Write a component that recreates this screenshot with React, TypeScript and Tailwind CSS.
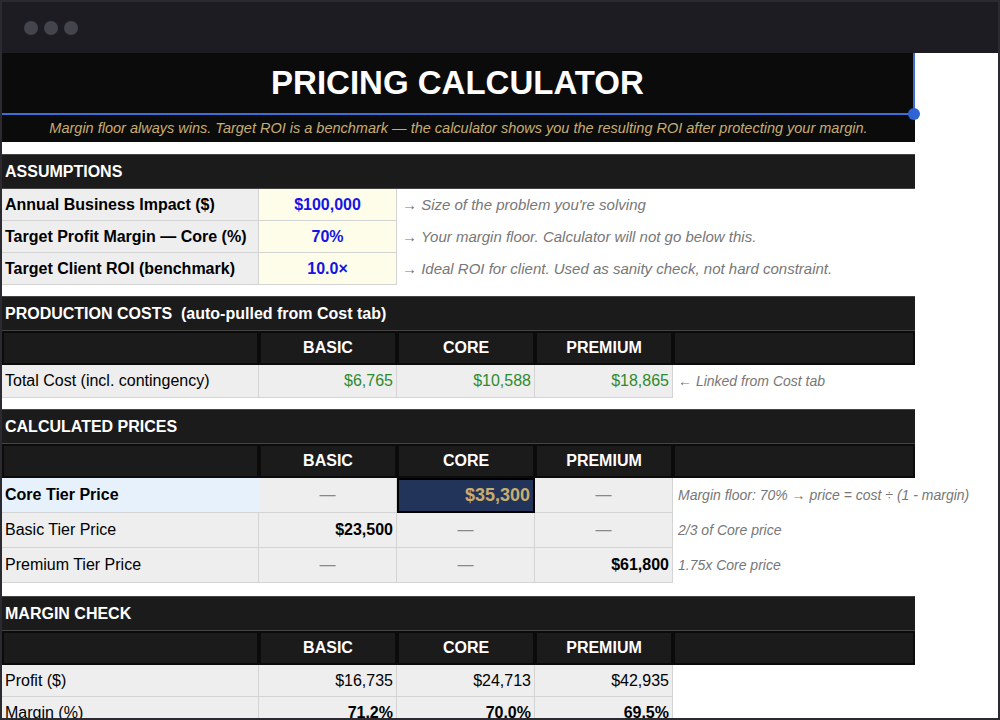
import React from "react";

const COLS = "grid grid-cols-[257px_138px_138px_138px_242px]";
const N = { fontFamily: '"Liberation Sans",Arial,sans-serif' };
const note = "flex items-center pl-[5px] italic text-[14px] text-[#777] whitespace-nowrap";

function SecHead({ children }: { children: React.ReactNode }) {
  return (
    <div className="h-[35px] bg-[#1b1b1b] border-y border-[#444] flex items-center pl-[3px] text-white font-bold text-[16px]">
      {children}
    </div>
  );
}

function TierHead() {
  return (
    <div className={`${COLS} h-[34px] bg-[#0b0b0b] text-white font-bold text-[16px]`}>
      <div className="bg-[#1b1b1b] border-[2px] border-[#0b0b0b]" />
      {["BASIC", "CORE", "PREMIUM"].map((t) => (
        <div key={t} className="bg-[#1b1b1b] border-[2px] border-[#0b0b0b] flex items-center justify-center">{t}</div>
      ))}
      <div className="bg-[#1b1b1b] border-[2px] border-[#0b0b0b]" />
    </div>
  );
}

const cell = "bg-[#eeeeee] border-r border-b border-[#d4d4d4] flex items-center px-[3px] whitespace-nowrap";
const dash = <span className="text-[#888]">—</span>;

export default function App() {
  return (
    <div className="w-[1000px] h-[720px] bg-[#1c1c22] border-2 border-[#2a2a30] overflow-hidden" style={N}>
      <div className="h-[51px] flex items-center gap-[6px] pl-[22px]">
        <span className="w-[14px] h-[14px] rounded-full bg-[#44444c]" />
        <span className="w-[14px] h-[14px] rounded-full bg-[#44444c]" />
        <span className="w-[14px] h-[14px] rounded-full bg-[#44444c]" />
      </div>
      <div className="h-[667px] bg-white overflow-hidden">
        <div className="w-[913px]">
          <div className="relative h-[62px] bg-[#0b0b0b] border-b-2 border-r-2 border-[#3a6fd8] flex items-center justify-center text-white font-bold text-[33px]">
            PRICING CALCULATOR
            <span className="absolute right-[-7px] bottom-[-7px] w-[12px] h-[12px] rounded-full bg-[#2f64d6]" />
          </div>
          <div className="h-[27px] bg-[#0b0b0b] flex items-center justify-center italic text-[14.5px] text-[#c8ad70] whitespace-nowrap">
            Margin floor always wins. Target ROI is a benchmark — the calculator shows you the resulting ROI after protecting your margin.
          </div>
          <div className="h-[12px]" />
          <SecHead>ASSUMPTIONS</SecHead>
          {[
            ["Annual Business Impact ($)", "$100,000", "→ Size of the problem you're solving"],
            ["Target Profit Margin — Core (%)", "70%", "→ Your margin floor. Calculator will not go below this."],
            ["Target Client ROI (benchmark)", "10.0×", "→ Ideal ROI for client. Used as sanity check, not hard constraint."],
          ].map(([a, b, c]) => (
            <div key={a} className="grid grid-cols-[257px_138px_518px] h-[32px] text-[16px]">
              <div className={`${cell} font-bold text-black`}>{a}</div>
              <div className="bg-[#fefdea] border-r border-b border-[#d4d4d4] flex items-center justify-center font-bold text-[#1414e6]">{b}</div>
              <div className={`${note} text-[15px]`}>{c}</div>
            </div>
          ))}
          <div className="h-[11px]" />
          <SecHead>PRODUCTION COSTS&nbsp;&nbsp;(auto-pulled from Cost tab)</SecHead>
          <TierHead />
          <div className={`${COLS} h-[33px] text-[16px]`}>
            <div className={cell}>Total Cost (incl. contingency)</div>
            {["$6,765", "$10,588", "$18,865"].map((v) => (
              <div key={v} className={`${cell} justify-end text-[#2e8a2e]`}>{v}</div>
            ))}
            <div className={note}>← Linked from Cost tab</div>
          </div>
          <div className="h-[11px]" />
          <SecHead>CALCULATED PRICES</SecHead>
          <TierHead />
          <div className={`${COLS} h-[35px] text-[16px]`}>
            <div className="bg-[#e6f1fb] border-b border-[#d4d4d4] flex items-center px-[3px] font-bold">Core Tier Price</div>
            <div className={`${cell} justify-center`}>{dash}</div>
            <div className="bg-[#22345a] border-2 border-black flex items-center justify-end px-[3px] font-bold text-[#c8ad70] text-[18px]">$35,300</div>
            <div className={`${cell} justify-center`}>{dash}</div>
            <div className={note}>Margin floor: 70% → price = cost ÷ (1 - margin)</div>
          </div>
          <div className={`${COLS} h-[35px] text-[16px]`}>
            <div className={cell}>Basic Tier Price</div>
            <div className={`${cell} justify-end font-bold`}>$23,500</div>
            <div className={`${cell} justify-center`}>{dash}</div>
            <div className={`${cell} justify-center`}>{dash}</div>
            <div className={note}>2/3 of Core price</div>
          </div>
          <div className={`${COLS} h-[35px] text-[16px]`}>
            <div className={cell}>Premium Tier Price</div>
            <div className={`${cell} justify-center`}>{dash}</div>
            <div className={`${cell} justify-center`}>{dash}</div>
            <div className={`${cell} justify-end font-bold`}>$61,800</div>
            <div className={note}>1.75x Core price</div>
          </div>
          <div className="h-[13px]" />
          <SecHead>MARGIN CHECK</SecHead>
          <TierHead />
          <div className={`${COLS} h-[32px] text-[16px]`}>
            <div className={cell}>Profit ($)</div>
            {["$16,735", "$24,713", "$42,935"].map((v) => (
              <div key={v} className={`${cell} justify-end`}>{v}</div>
            ))}
            <div />
          </div>
          <div className={`${COLS} h-[32px] text-[16px]`}>
            <div className={cell}>Margin (%)</div>
            {["71.2%", "70.0%", "69.5%"].map((v) => (
              <div key={v} className={`${cell} justify-end font-bold`}>{v}</div>
            ))}
            <div />
          </div>
        </div>
      </div>
    </div>
  );
}
